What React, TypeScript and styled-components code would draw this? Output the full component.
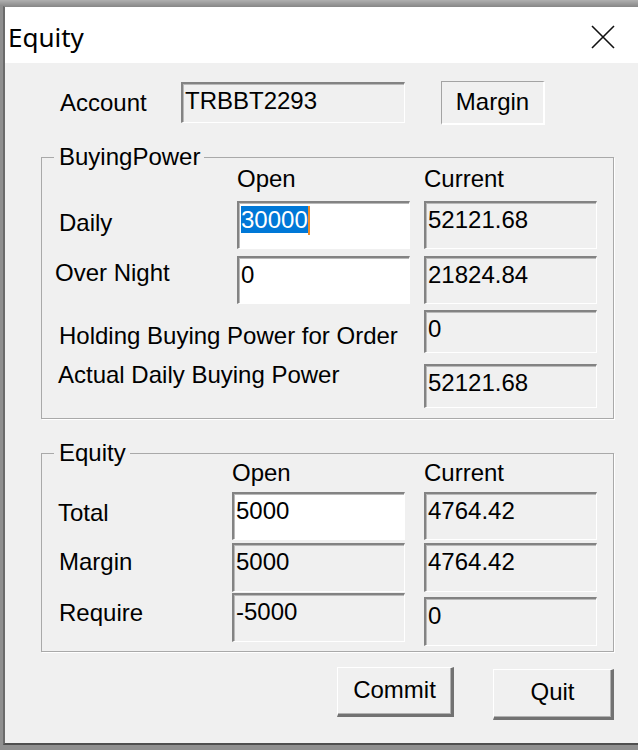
import React from 'react'
import styled, { createGlobalStyle } from 'styled-components'

const GlobalStyle = createGlobalStyle`
  html, body {
    margin: 0;
    padding: 0;
  }
  body {
    background: #9d9d9d;
    font-family: 'Liberation Sans', Arial, sans-serif;
    color: #000;
  }
`

const Screen = styled.div`
  width: 638px;
  height: 750px;
  overflow: hidden;
  box-sizing: border-box;
  padding: 6px 0 0 3px;
  background: linear-gradient(#b0b0b0, #8c8c8c 6px, #8f8f8f 6px);
`

const Window = styled.div`
  width: 637px;
  height: 739px;
  box-sizing: border-box;
  display: flex;
  flex-direction: column;
  background: #f0f0f0;
  border-top: 1px solid #8a8a8a;
  border-left: 2px solid #6b6b6b;
  border-bottom: 2px solid #4f4f4f;
`

const TitleBar = styled.div`
  height: 56px;
  flex: none;
  display: flex;
  align-items: center;
  justify-content: space-between;
  background: #fff;
  padding: 0 25px 0 3px;
`

const Title = styled.div`
  font-family: 'Noto Sans', 'Open Sans', sans-serif;
  font-size: 26px;
  padding-top: 4px;
`

const CloseButton = styled.svg`
  width: 24px;
  height: 24px;
  margin-top: 4px;
`

const Body = styled.div`
  flex: 1;
  display: flex;
  flex-direction: column;
  padding: 17px 26px 0 36px;
`

const AccountRow = styled.div`
  height: 45px;
  display: flex;
  align-items: center;
  margin-left: 19px;
`

const AccountLabel = styled.div`
  width: 121px;
  font-size: 24px;
`

const Field = styled.div<{ $w: number; $h: number; $editable?: boolean; $top?: number }>`
  width: ${p => p.$w}px;
  height: ${p => p.$h}px;
  margin-top: ${p => p.$top ?? 0}px;
  box-sizing: border-box;
  background: ${p => (p.$editable ? '#ffffff' : '#f0f0f0')};
  border-style: solid;
  border-width: 2px 1px 1px 2px;
  border-color: #838383 #ffffff #ffffff #838383;
  box-shadow: inset 1px 1px 0 #b9b9b9;
  padding: 3px 2px 0 2px;
  font-size: 24px;
  line-height: 28px;
  white-space: nowrap;
  overflow: hidden;
`

const Selection = styled.span`
  background: #0078d7;
  color: #fff;
`

const Caret = styled.span`
  display: inline-block;
  width: 2px;
  height: 29px;
  vertical-align: top;
  background: #f08a24;
`

const TypeBox = styled.div`
  width: 104px;
  height: 44px;
  margin-left: 36px;
  box-sizing: border-box;
  border-style: solid;
  border-width: 1px 2px 2px 1px;
  border-color: #a3a3a3 #ffffff #ffffff #a3a3a3;
  display: flex;
  align-items: center;
  justify-content: center;
  font-size: 24px;
`

const GroupBox = styled.fieldset<{ $label: number; $gap: number; $top: number; $bottom: number }>`
  --label: ${p => p.$label}px;
  --gap: ${p => p.$gap}px;
  margin: ${p => p.$top}px 0 0 0;
  padding: 0 16px ${p => p.$bottom}px 17px;
  min-width: 0;
  border: 1px solid #a9a9a9;
  box-shadow: 1px 1px 0 #ffffff;
`

const Legend = styled.legend`
  margin-left: -5px;
  padding: 0 4px 0 5px;
  font-size: 24px;
  line-height: 20px;
`

const Row = styled.div<{ $top: number }>`
  display: grid;
  grid-template-columns: var(--label) 173px 173px;
  column-gap: var(--gap);
  align-items: start;
  margin-top: ${p => p.$top}px;
`

const ColHeader = styled.div<{ $col: number }>`
  grid-column: ${p => p.$col};
  font-size: 24px;
  line-height: 24px;
`

const Label = styled.div<{ $dy: number; $dx?: number; $wide?: boolean }>`
  grid-column: ${p => (p.$wide ? '1 / 3' : '1')};
  margin-top: ${p => p.$dy}px;
  margin-left: ${p => p.$dx ?? 0}px;
  font-size: 24px;
  line-height: 28px;
  white-space: nowrap;
`

const Cell = styled.div<{ $col: number }>`
  grid-column: ${p => p.$col};
`

const ButtonRow = styled.div`
  display: flex;
  justify-content: flex-end;
  align-items: flex-start;
  gap: 39px;
  margin-top: 15px;
`

const Button = styled.button<{ $w: number; $h: number; $top?: number }>`
  width: ${p => p.$w}px;
  height: ${p => p.$h}px;
  margin-top: ${p => p.$top ?? 0}px;
  box-sizing: border-box;
  padding: 0 0 3px 0;
  background: #f0f0f0;
  border-style: solid;
  border-width: 1px 3px 3px 1px;
  border-color: #ffffff #727272 #727272 #ffffff;
  box-shadow: inset -1px -1px 0 #b1b1b1;
  font-family: 'Liberation Sans', Arial, sans-serif;
  font-size: 24px;
  color: #000;
`

export default function App() {
  return (
    <>
      <GlobalStyle />
      <Screen>
        <Window>
          <TitleBar>
            <Title>Equity</Title>
            <CloseButton viewBox="0 0 24 24">
              <path d="M1 1 L23 23 M23 1 L1 23" stroke="#111" strokeWidth="1.6" fill="none" />
            </CloseButton>
          </TitleBar>
          <Body>
            <AccountRow>
              <AccountLabel>Account</AccountLabel>
              <Field $w={224} $h={41}>TRBBT2293</Field>
              <TypeBox>Margin</TypeBox>
            </AccountRow>

            <GroupBox $label={164} $gap={14} $top={22} $bottom={10}>
              <Legend>BuyingPower</Legend>
              <Row $top={0}>
                <ColHeader $col={2}>Open</ColHeader>
                <ColHeader $col={3}>Current</ColHeader>
              </Row>
              <Row $top={10}>
                <Label $dy={8}>Daily</Label>
                <Cell $col={2}>
                  <Field $w={173} $h={48} $editable>
                    <Selection>30000</Selection>
                    <Caret />
                  </Field>
                </Cell>
                <Cell $col={3}>
                  <Field $w={173} $h={48}>52121.68</Field>
                </Cell>
              </Row>
              <Row $top={7}>
                <Label $dy={3} $dx={-4}>Over Night</Label>
                <Cell $col={2}>
                  <Field $w={173} $h={48} $editable>0</Field>
                </Cell>
                <Cell $col={3}>
                  <Field $w={173} $h={48}>21824.84</Field>
                </Cell>
              </Row>
              <Row $top={6}>
                <Label $dy={12} $wide>Holding Buying Power for Order</Label>
                <Cell $col={3}>
                  <Field $w={173} $h={43}>0</Field>
                </Cell>
              </Row>
              <Row $top={11}>
                <Label $dy={-3} $dx={-1} $wide>Actual Daily Buying Power</Label>
                <Cell $col={3}>
                  <Field $w={173} $h={44}>52121.68</Field>
                </Cell>
              </Row>
            </GroupBox>

            <GroupBox $label={154} $gap={19} $top={24} $bottom={5}>
              <Legend>Equity</Legend>
              <Row $top={-2}>
                <ColHeader $col={2}>Open</ColHeader>
                <ColHeader $col={3}>Current</ColHeader>
              </Row>
              <Row $top={7}>
                <Label $dy={7} $dx={-1}>Total</Label>
                <Cell $col={2}>
                  <Field $w={173} $h={48} $editable>5000</Field>
                </Cell>
                <Cell $col={3}>
                  <Field $w={173} $h={48}>4764.42</Field>
                </Cell>
              </Row>
              <Row $top={3}>
                <Label $dy={5}>Margin</Label>
                <Cell $col={2}>
                  <Field $w={173} $h={49}>5000</Field>
                </Cell>
                <Cell $col={3}>
                  <Field $w={173} $h={49}>4764.42</Field>
                </Cell>
              </Row>
              <Row $top={1}>
                <Label $dy={6}>Require</Label>
                <Cell $col={2}>
                  <Field $w={173} $h={49}>-5000</Field>
                </Cell>
                <Cell $col={3}>
                  <Field $w={173} $h={49} $top={4}>0</Field>
                </Cell>
              </Row>
            </GroupBox>

            <ButtonRow>
              <Button $w={117} $h={50}>Commit</Button>
              <Button $w={121} $h={51} $top={2}>Quit</Button>
            </ButtonRow>
          </Body>
        </Window>
      </Screen>
    </>
  )
}
